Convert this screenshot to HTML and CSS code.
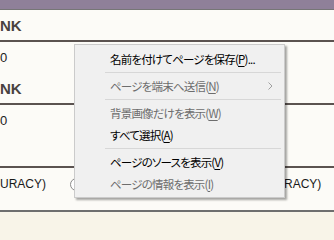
FILE: index.html
```html
<!DOCTYPE html>
<html lang="ja">
<head>
<meta charset="utf-8">
<link rel="stylesheet" href="styles.css">
</head>
<body>
<div class="topbar"></div>
<div class="panel">
  <div class="sec">
    <div class="head">NK</div>
    <div class="val">0</div>
  </div>
  <div class="sec">
    <div class="head">NK</div>
    <div class="val">0</div>
  </div>
  <div class="spacer"></div>
  <div class="opts">
    <span class="opt1">URACY)</span>
    <span class="radio"></span>
    <span class="opt2">RACY)</span>
  </div>
</div>

<div class="menu">
  <div class="item">名前を付けてページを保存(<u>P</u>)...</div>
  <div class="sep"></div>
  <div class="item dis">ページを端末へ送信(<u>N</u>)<svg class="arrow" width="5" height="8" viewBox="0 0 5 8"><path d="M0.5 0.5 L4 4 L0.5 7.5" fill="none" stroke="#a0a0a0" stroke-width="1"/></svg></div>
  <div class="sep"></div>
  <div class="item dis">背景画像だけを表示(<u>W</u>)</div>
  <div class="item">すべて選択(<u>A</u>)</div>
  <div class="sep"></div>
  <div class="item">ページのソースを表示(<u>V</u>)</div>
  <div class="item dis">ページの情報を表示(<u>I</u>)</div>
</div>
</body>
</html>
```
FILE: styles.css
```css
html, body {
  margin: 0;
  padding: 0;
}
body {
  width: 334px;
  height: 240px;
  overflow: hidden;
  background: #f8f4e8;
  position: relative;
  font-family: "Liberation Sans", Arial, sans-serif;
}
.topbar {
  height: 9px;
  background: #8f8099;
  border-bottom: 1px solid #767676;
}
.panel {
  background: #fcfbf7;
  height: 200px;
  border-bottom: 2px solid #6e6e6e;
  overflow: hidden;
}
.head {
  padding: 7px 0 5px;
  height: 18px;
  line-height: 18px;
  font-size: 15px;
  font-weight: bold;
  color: #48423f;
  border-bottom: 2px solid #5b5350;
}
.val {
  padding: 8px 0 7px;
  height: 16px;
  line-height: 16px;
  font-size: 13px;
  color: #222;
}
.spacer {
  height: 30px;
  border-bottom: 2px solid #5b5350;
}
.opts {
  display: flex;
  align-items: center;
  padding-top: 8px;
  height: 16px;
  line-height: 16px;
  font-size: 12px;
  color: #1a1a1a;
}
.radio {
  width: 11px;
  height: 11px;
  border: 1px solid #8a8a8a;
  border-radius: 50%;
  margin-left: 24px;
  background: #fff;
}
.opt2 {
  margin-left: 201px;
}
.menu {
  position: absolute;
  left: 74px;
  top: 44px;
  width: 205px;
  padding: 3px 2px 2px;
  background: #f0f0f0;
  border: 1px solid #cbcbcb;
  box-shadow: 2px 2px 2px rgba(0, 0, 0, 0.35);
  font-family: "Noto Sans CJK JP", sans-serif;
  font-feature-settings: "palt";
  font-size: 11.5px;
  letter-spacing: -0.8px;
  color: #000;
}
.item {
  height: 22px;
  line-height: 22px;
  padding-left: 33px;
  display: flex;
  align-items: center;
  white-space: nowrap;
}
.item u {
  text-underline-offset: 2px;
}
.dis {
  color: #6d6d6d;
}
.arrow {
  margin-left: auto;
  margin-right: 9px;
}
.sep {
  height: 5px;
  margin: 0 1px 0 28px;
}
.sep::after {
  content: "";
  display: block;
  height: 1px;
  background: #d7d7d7;
  position: relative;
  top: 2px;
}
```
